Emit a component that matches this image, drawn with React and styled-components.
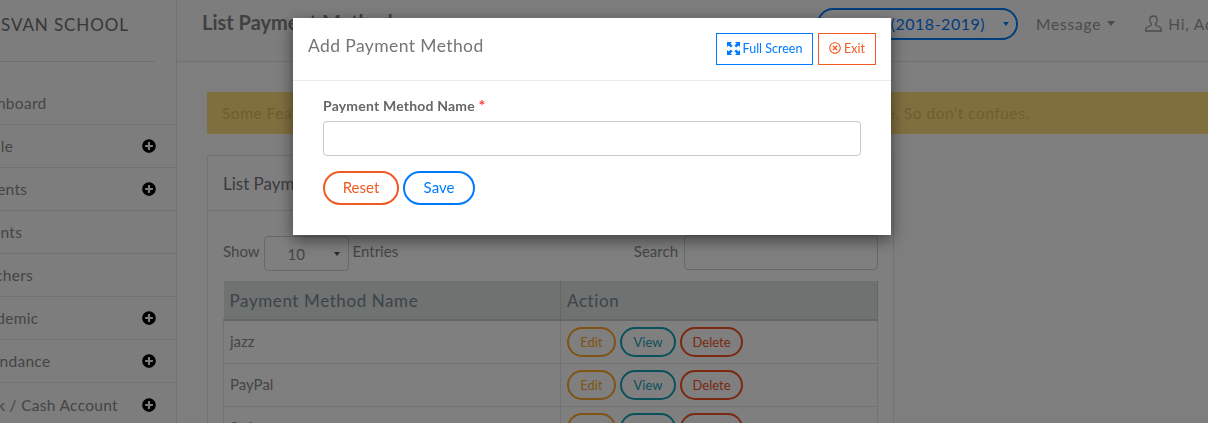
import React from 'react';
import styled, { createGlobalStyle } from 'styled-components';
import { FaPlusCircle, FaRegTimesCircle } from 'react-icons/fa';

const GlobalStyle = createGlobalStyle`
    html, body {
        margin: 0;
        height: 100%;
        overflow: hidden;
    }

    body {
        font-family: 'Lato', 'Open Sans', sans-serif;
        background: #fff;
        color: #8a8a8a;
    }

    * {
        box-sizing: border-box;
    }
`;

const Page = styled.div`
    display: flex;
    width: 1208px;
    height: 423px;
    overflow: hidden;
`;

const Sidebar = styled.aside`
    flex: 0 0 177px;
    background: #fafafa;
    border-right: 1px solid #e4e4e4;
    overflow: hidden;
`;

const Brand = styled.div`
    height: 62px;
    width: 155px;
    padding: 15px 0 0 1px;
    font-size: 17px;
    line-height: 20px;
    letter-spacing: 0.9px;
    color: #707070;
    white-space: nowrap;
    border-bottom: 1px solid #ddd;
`;

const Menu = styled.ul`
    list-style: none;
    margin: 20px 0 0;
    padding: 0;
`;

const MenuItem = styled.li`
    display: flex;
    align-items: center;
    height: 43px;
    padding-right: 20px;
    border-bottom: ${(p) => (p.last ? 'none' : '1px solid #e4e4e4')};
    font-size: 15.5px;
    letter-spacing: 0.3px;
    color: #8a8a8a;
`;

const MenuLabel = styled.span`
    flex: 1;
    white-space: nowrap;
    margin-left: ${(p) => p.shift}px;
`;

const PlusIcon = styled(FaPlusCircle)`
    width: 14px;
    height: 14px;
    color: #000;
`;

const Main = styled.main`
    flex: 1;
    min-width: 0;
    background: #fcfcfc;
`;

const TopBar = styled.header`
    display: flex;
    align-items: center;
    height: 62px;
    padding: 0 0 14px 25px;
    border-bottom: 1px solid #e4e4e4;
    background: #fafafa;
    white-space: nowrap;
`;

const PageTitle = styled.h1`
    flex: 0 0 615px;
    margin: 0 0 4px;
    font-size: 20px;
    font-weight: 700;
    color: #828282;
`;

const SessionPill = styled.div`
    display: flex;
    align-items: center;
    justify-content: flex-end;
    gap: 18px;
    flex: 0 0 201px;
    height: 32px;
    padding-right: 7px;
    margin-right: 18px;
    border: 2px solid #007bff;
    border-radius: 16px;
    background: #fff;
    font-size: 16px;
    letter-spacing: 0.5px;
    color: #007bff;
`;

const Caret = styled.span`
    width: 0;
    height: 0;
    border-left: ${(p) => p.size || 4}px solid transparent;
    border-right: ${(p) => p.size || 4}px solid transparent;
    border-top: ${(p) => (p.size || 4) + 1}px solid ${(p) => p.color || '#007bff'};
`;

const TopLink = styled.span`
    display: flex;
    align-items: center;
    gap: 6px;
    font-size: 15.5px;
    letter-spacing: 0.8px;
    color: #999;
`;

const MessageLink = styled(TopLink)`
    margin-right: 30px;
`;

const Content = styled.div`
    padding: 30px 0 0 30px;
`;

const Alert = styled.div`
    display: flex;
    align-items: center;
    height: 42px;
    width: 1010px;
    padding-left: 15px;
    background: #ffdf7e;
    font-size: 15.5px;
    letter-spacing: 0.5px;
    color: #dcbc5e;
    white-space: nowrap;
`;

const Card = styled.section`
    width: 687px;
    margin-top: 21px;
    background: #fff;
    border: 1px solid #e4e4e4;
    border-bottom: none;
    border-radius: 3px;
`;

const CardHeader = styled.div`
    height: 55px;
    padding: 17px 15px 0;
    border-bottom: 1px solid #e4e4e4;
    font-size: 17px;
    color: #777;
`;

const CardBody = styled.div`
    padding: 24px 15px 0;
`;

const Controls = styled.div`
    display: flex;
    justify-content: space-between;
    font-size: 15px;
    color: #8a8a8a;
`;

const ControlGroup = styled.label`
    display: flex;
    gap: 4px;
    line-height: 32px;
`;

const PageSize = styled.div`
    display: flex;
    align-items: center;
    justify-content: space-between;
    width: 85px;
    height: 35px;
    margin-top: 1px;
    padding: 0 8px 0 23px;
    border: 1px solid #ced4da;
    border-radius: 4px;
`;

const SearchBox = styled.input`
    width: 194px;
    height: 35px;
    margin-left: 2px;
    background: #fff;
    border: 1px solid #ced4da;
    border-radius: 4px;
`;

const Table = styled.table`
    width: 100%;
    margin-top: 10px;
    border-collapse: collapse;
    table-layout: fixed;
    font-size: 15px;
`;

const HeadCell = styled.th`
    width: ${(p) => p.width}px;
    height: 39px;
    padding: 0 6px;
    background: #dce4e0;
    border-right: 1px solid #c8cecc;
    border-bottom: 2px solid #c8cecc;
    font-size: 17px;
    font-weight: 400;
    letter-spacing: 0.6px;
    text-align: left;
    color: #7c8894;
`;

const Cell = styled.td`
    height: 43px;
    padding: 0 6px 2px;
    border: 1px solid #e4e4e4;
    border-top: none;
    color: #8a8a8a;
`;

const ActionGroup = styled.div`
    display: flex;
    gap: 4px;
    padding-top: 2px;
`;

const PillButton = styled.button`
    width: ${(p) => p.width}px;
    height: 30px;
    padding: 0;
    background: transparent;
    border: 2px solid ${(p) => p.color};
    border-radius: 15px;
    font-family: inherit;
    font-size: 13px;
    color: ${(p) => p.color};
`;

const Overlay = styled.div`
    position: fixed;
    inset: 0;
    background: rgba(0, 0, 0, 0.5);
`;

const Modal = styled.div`
    position: fixed;
    left: 293px;
    top: 18px;
    width: 598px;
    height: 217px;
    background: #fff;
    box-shadow: 0 5px 15px rgba(0, 0, 0, 0.5);
`;

const ModalHeader = styled.div`
    display: flex;
    align-items: center;
    justify-content: space-between;
    height: 63px;
    padding: 0 15px;
    border-bottom: 1px solid #e9ecef;
`;

const ModalTitle = styled.h5`
    margin: 0 0 8px;
    font-size: 17.5px;
    font-weight: 400;
    letter-spacing: 0.4px;
    color: #757575;
`;

const HeaderButtons = styled.div`
    display: flex;
    gap: 5px;
`;

const SquareButton = styled.button`
    display: flex;
    align-items: center;
    justify-content: center;
    gap: 3px;
    width: ${(p) => p.width}px;
    height: 32px;
    padding: 0 0 2px;
    background: #fff;
    border: 1px solid ${(p) => p.color};
    font-family: inherit;
    font-size: 12.5px;
    color: ${(p) => p.color};
`;

const ModalBody = styled.form`
    padding: 16px 30px 0;
`;

const FieldLabel = styled.label`
    display: block;
    font-size: 14px;
    font-weight: 700;
    line-height: 17px;
    letter-spacing: 0.2px;
    color: #666;
`;

const Required = styled.span`
    font-size: 16px;
    line-height: 14px;
    color: #f44336;
`;

const TextInput = styled.input`
    display: block;
    width: 538px;
    height: 35px;
    margin-top: 7px;
    background: #fff;
    border: 1px solid #c8c8c8;
    border-radius: 4px;
`;

const FormButtons = styled.div`
    display: flex;
    gap: 4px;
    margin-top: 15px;
`;

const FormButton = styled.button`
    width: ${(p) => p.width}px;
    height: 34px;
    padding: 0 0 2px;
    background: #fff;
    border: 2px solid ${(p) => p.color};
    border-radius: 17px;
    font-family: inherit;
    font-size: 15px;
    color: ${(p) => p.color};
`;

const ExpandIcon = () => (
    <svg width="13" height="13" viewBox="0 0 13 13" fill="#007bff">
        <path d="M0 0h5L3.4 1.6 5.6 3.8 3.8 5.6 1.6 3.4 0 5z" />
        <path d="M13 0H8l1.6 1.6L7.4 3.8l1.8 1.8 2.2-2.2L13 5z" />
        <path d="M0 13h5l-1.6-1.6 2.2-2.2-1.8-1.8-2.2 2.2L0 8z" />
        <path d="M13 13H8l1.6-1.6-2.2-2.2 1.8-1.8 2.2 2.2L13 8z" />
    </svg>
);

const UserIcon = () => (
    <svg width="17" height="17" viewBox="0 0 17 17" fill="none" stroke="#999" strokeWidth="1.3">
        <path d="M8.5 1c-2.3 0-3.7 1.6-3.7 3.8 0 1.6.7 3 1.6 3.9v1.4c0 .6-5.2 1.7-5.6 3.4L.6 16h15.8l-.2-2.5c-.4-1.7-5.6-2.8-5.6-3.4V8.7c.9-.9 1.6-2.3 1.6-3.9C12.2 2.6 10.8 1 8.5 1z" />
    </svg>
);

const menuItems = [
    { label: 'Dashboard', shift: -30 },
    { label: 'Profile', shift: -33, plus: true },
    { label: 'Students', shift: -35, plus: true },
    { label: 'Parents', shift: -31 },
    { label: 'Teachers', shift: -29 },
    { label: 'Academic', shift: -30, plus: true },
    { label: 'Attendance', shift: -31, plus: true },
    { label: 'Bank / Cash Account', shift: -30, plus: true, last: true },
];

const rows = ['jazz', 'PayPal', 'Stripe'];

const App = () => {
    return (
        <>
            <GlobalStyle />
            <Page>
                <Sidebar>
                    <Brand>SVAN SCHOOL</Brand>
                    <Menu>
                        {menuItems.map((item) => (
                            <MenuItem key={item.label} last={item.last}>
                                <MenuLabel shift={item.shift}>{item.label}</MenuLabel>
                                {item.plus && <PlusIcon />}
                            </MenuItem>
                        ))}
                    </Menu>
                </Sidebar>
                <Main>
                    <TopBar>
                        <PageTitle>List Payment Method</PageTitle>
                        <SessionPill>
                            <span>Session (2018-2019)</span>
                            <Caret size={3} />
                        </SessionPill>
                        <MessageLink>Message <Caret color="#999" /></MessageLink>
                        <TopLink><UserIcon /> Hi, Admin</TopLink>
                    </TopBar>
                    <Content>
                        <Alert>Some Features are not working in a demo version because it is only for showing the software. So don't confues.</Alert>
                        <Card>
                            <CardHeader>List Payment Method</CardHeader>
                            <CardBody>
                                <Controls>
                                    <ControlGroup>
                                        Show
                                        <PageSize>10 <Caret color="#555" size={3} /></PageSize>
                                        Entries
                                    </ControlGroup>
                                    <ControlGroup>
                                        Search
                                        <SearchBox />
                                    </ControlGroup>
                                </Controls>
                                <Table>
                                    <thead>
                                        <tr>
                                            <HeadCell width={337}>Payment Method Name</HeadCell>
                                            <HeadCell>Action</HeadCell>
                                        </tr>
                                    </thead>
                                    <tbody>
                                        {rows.map((name) => (
                                            <tr key={name}>
                                                <Cell>{name}</Cell>
                                                <Cell>
                                                    <ActionGroup>
                                                        <PillButton color="#ffa726" width={49}>Edit</PillButton>
                                                        <PillButton color="#17a2b8" width={56}>View</PillButton>
                                                        <PillButton color="#f4511e" width={63}>Delete</PillButton>
                                                    </ActionGroup>
                                                </Cell>
                                            </tr>
                                        ))}
                                    </tbody>
                                </Table>
                            </CardBody>
                        </Card>
                    </Content>
                </Main>
            </Page>
            <Overlay />
            <Modal>
                <ModalHeader>
                    <ModalTitle>Add Payment Method</ModalTitle>
                    <HeaderButtons>
                        <SquareButton color="#007bff" width={97}><ExpandIcon /> Full Screen</SquareButton>
                        <SquareButton color="#f15a22" width={58}><FaRegTimesCircle size={12} /> Exit</SquareButton>
                    </HeaderButtons>
                </ModalHeader>
                <ModalBody>
                    <FieldLabel>Payment Method Name <Required>*</Required></FieldLabel>
                    <TextInput />
                    <FormButtons>
                        <FormButton type="button" color="#f15a22" width={76}>Reset</FormButton>
                        <FormButton type="button" color="#007bff" width={72}>Save</FormButton>
                    </FormButtons>
                </ModalBody>
            </Modal>
        </>
    );
};

export default App;
